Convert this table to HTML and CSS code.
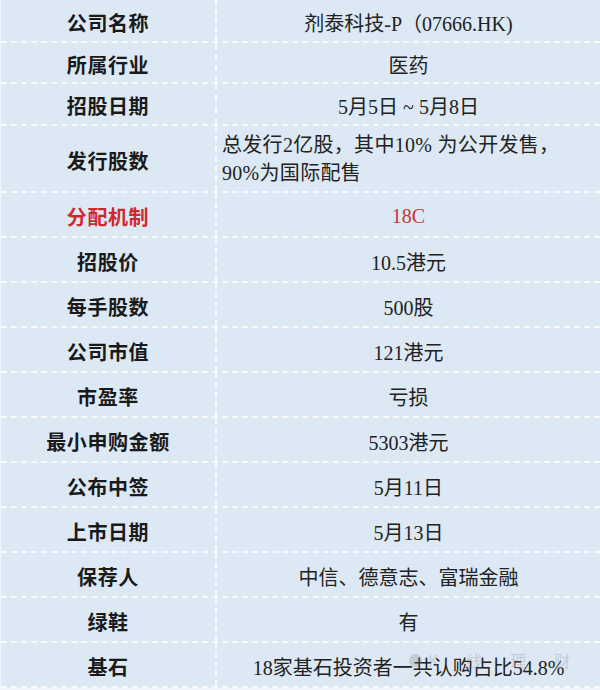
FILE: index.html
```html
<!DOCTYPE html>
<html lang="zh">
<head>
<meta charset="utf-8">
<title>剂泰科技-P 招股信息</title>
<link rel="stylesheet" href="styles.css">
</head>
<body>
<div class="sheet">
  <div class="row h43"><div class="k">公司名称</div><div class="v">剂泰科技-P（07666.HK)</div></div>
  <div class="row h41"><div class="k">所属行业</div><div class="v">医药</div></div>
  <div class="row h42"><div class="k">招股日期</div><div class="v">5月5日 ~ 5月8日</div></div>
  <div class="row h67"><div class="k">发行股数</div><div class="v left">总发行2亿股，其中10% 为公开发售，<br>90%为国际配售</div></div>
  <div class="row"><div class="k red">分配机制</div><div class="v red">18C</div></div>
  <div class="row"><div class="k">招股价</div><div class="v">10.5港元</div></div>
  <div class="row"><div class="k">每手股数</div><div class="v">500股</div></div>
  <div class="row"><div class="k">公司市值</div><div class="v">121港元</div></div>
  <div class="row"><div class="k">市盈率</div><div class="v">亏损</div></div>
  <div class="row"><div class="k">最小申购金额</div><div class="v">5303港元</div></div>
  <div class="row"><div class="k">公布中签</div><div class="v">5月11日</div></div>
  <div class="row"><div class="k">上市日期</div><div class="v">5月13日</div></div>
  <div class="row"><div class="k">保荐人</div><div class="v">中信、德意志、富瑞金融</div></div>
  <div class="row"><div class="k">绿鞋</div><div class="v">有</div></div>
  <div class="row last"><div class="k">基石</div><div class="v">18家基石投资者一共认购占比54.8%</div></div>
  <div class="watermark"><span class="wm-dot"></span><span class="wm-text">K线理财</span></div>
</div>
</body>
</html>
```
FILE: styles.css
```css
html, body {
  margin: 0;
  padding: 0;
  background: #eef4fa;
}
body {
  width: 600px;
  height: 690px;
  overflow: hidden;
}
.sheet {
  position: relative;
  margin-left: 1px;
  width: 599px;
  background: #dce8f3;
  font-family: "Noto Sans CJK SC", sans-serif;
  color: #1e1e1e;
}
.row {
  display: grid;
  grid-template-columns: 216px 1fr;
  height: 45px;
  box-sizing: border-box;
  border-bottom: 2px dashed #f7fafd;
}
.row.h43 { height: 43px; }
.row.h41 { height: 41px; }
.row.h42 { height: 42px; }
.row.h67 { height: 67px; }
.k {
  display: flex;
  align-items: center;
  justify-content: center;
  padding-top: 3px;
  font-weight: 700;
  font-size: 20px;
  letter-spacing: 0.6px;
  color: #1a1a1a;
  border-right: 2px dashed #f7fafd;
}
.v {
  display: flex;
  align-items: center;
  justify-content: center;
  padding-top: 3px;
  font-family: "Liberation Serif", "Noto Sans CJK SC", serif;
  font-size: 20px;
  color: #222;
}
.v.left {
  display: block;
  padding-left: 5px;
  padding-top: 5px;
  line-height: 28px;
  letter-spacing: 0.3px;
}
.red { color: #d0282e; }
.v.red { color: #c8343a; }
.watermark {
  position: absolute;
  left: 408px;
  bottom: 16px;
  display: flex;
  align-items: center;
  gap: 6px;
  white-space: nowrap;
  font-size: 16px;
  color: rgba(120, 130, 140, 0.28);
}
.wm-text {
  letter-spacing: 28px;
}
.wm-dot {
  flex: none;
  width: 13px;
  height: 13px;
  border-radius: 50%;
  background: rgba(120, 130, 140, 0.28);
}
```
